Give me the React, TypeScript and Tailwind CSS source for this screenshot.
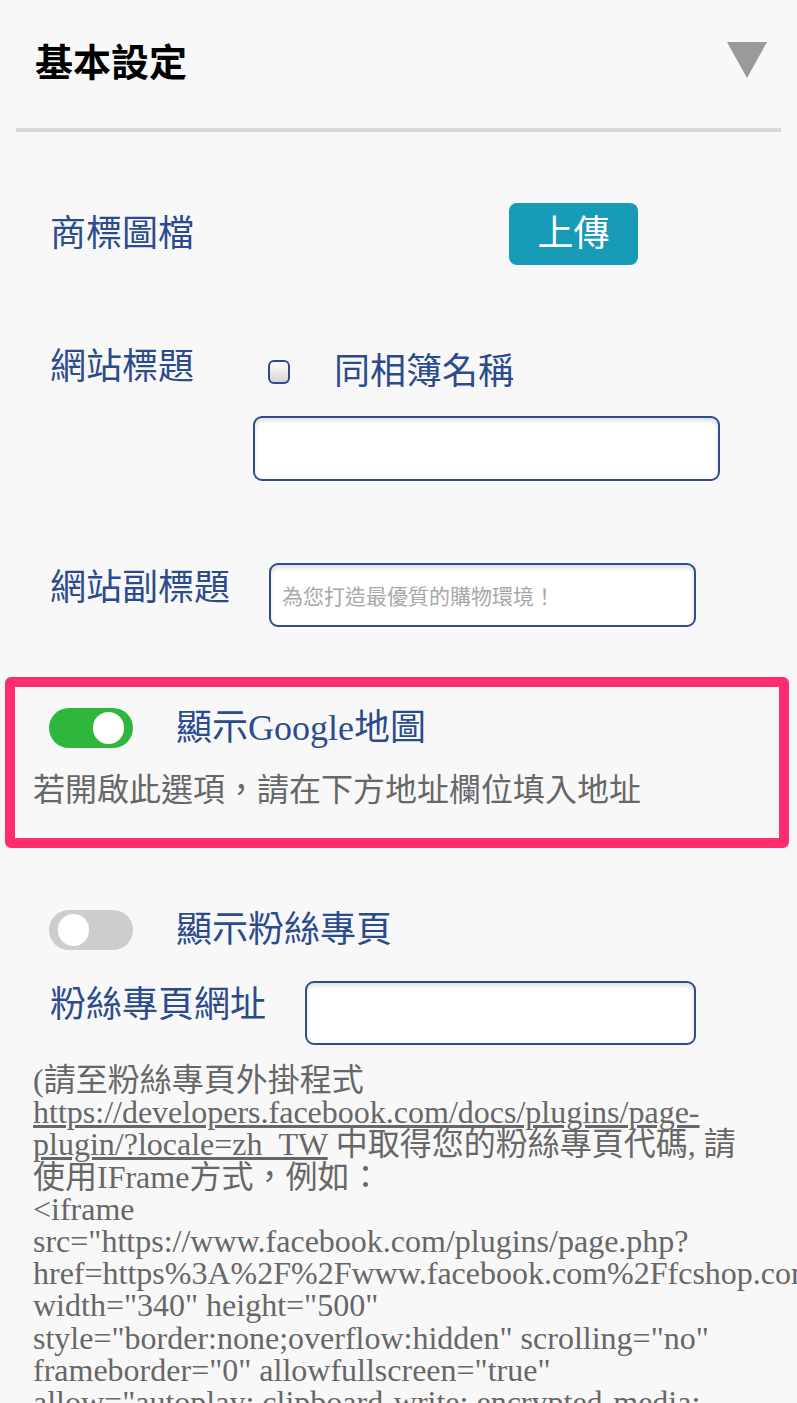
import { useState } from "react";

const blue = "text-[#2b4b8d]";

function Toggle({ on, onClick }: { on: boolean; onClick: () => void }) {
  return (
    <button
      type="button"
      onClick={onClick}
      className={`flex h-[40px] w-[84px] shrink-0 items-center rounded-full px-[9px] ${
        on ? "justify-end bg-[#2eb73c]" : "justify-start bg-[#cdcdcd]"
      }`}
    >
      <span className="block h-[32px] w-[31px] rounded-full bg-white" />
    </button>
  );
}

export default function App() {
  const [sameAlbum, setSameAlbum] = useState(false);
  const [showMap, setShowMap] = useState(true);
  const [showFans, setShowFans] = useState(false);

  return (
    <main className="min-h-screen w-full overflow-hidden bg-[#f8f8f9] pb-10 font-[Liberation_Serif,Noto_Sans_CJK_TC,serif]">
      {/* 標題列 */}
      <div className="flex h-[120px] items-center justify-between pl-[35px] pr-[30px]">
        <h1 className="text-[38px] font-bold leading-none text-black font-[Noto_Sans_CJK_TC,sans-serif]">
          基本設定
        </h1>
        <svg width="40" height="36" viewBox="0 0 40 36">
          <polygon points="0,0 40,0 20,36" fill="#9a9a9a" />
        </svg>
      </div>
      <div className="mx-[16px] mt-[8px] h-[4px] bg-[#ddd6d9]" />

      {/* 商標圖檔 */}
      <div className="mt-[71px] flex items-center pl-[50px]">
        <span className={`w-[459px] text-[36px] leading-none ${blue}`}>商標圖檔</span>
        <button className="flex h-[62px] w-[129px] items-center justify-center rounded-[8px] bg-[#179bb7] text-[36px] leading-none text-white">
          上傳
        </button>
      </div>

      {/* 網站標題 */}
      <div className="mt-[84px] flex items-start pl-[50px]">
        <span className={`w-[203px] text-[36px] leading-none ${blue}`}>網站標題</span>
        <div className="flex flex-col pt-[5px]">
          <label className="flex h-[36px] items-center pl-[15px]">
            <button
              type="button"
              onClick={() => setSameAlbum(!sameAlbum)}
              className="flex h-[24px] w-[22px] items-center justify-center rounded-[6px] border-2 border-[#2c4a8c] bg-gradient-to-b from-white to-[#d6d6d6] text-[14px] leading-none text-[#2c4a8c]"
            >
              {sameAlbum ? "✓" : ""}
            </button>
            <span className={`ml-[44px] text-[36px] leading-none ${blue}`}>同相簿名稱</span>
          </label>
          <input
            type="text"
            className="mt-[26px] h-[65px] w-[467px] rounded-[9px] border-2 border-[#2f4d8c] bg-white px-3 text-[22px] shadow-[inset_0_3px_4px_rgba(0,0,0,0.12)] outline-none"
          />
        </div>
      </div>

      {/* 網站副標題 */}
      <div className="mt-[82px] flex items-start pl-[50px]">
        <span className={`mt-[7px] w-[219px] text-[36px] leading-none ${blue}`}>網站副標題</span>
        <input
          type="text"
          placeholder="為您打造最優質的購物環境！"
          className="h-[64px] w-[427px] rounded-[9px] border-2 border-[#2f4d8c] bg-white pl-[11px] text-[21px] text-black shadow-[inset_0_3px_4px_rgba(0,0,0,0.12)] outline-none placeholder:text-[#a8a8a8] font-[Noto_Sans_CJK_TC,sans-serif]"
        />
      </div>

      {/* 顯示Google地圖 */}
      <div className="ml-[5px] mt-[50px] w-[784px] rounded-[6px] border-[10px] border-[#ff2d6e] pb-[32px] pl-[18px] pt-[21px]">
        <div className="ml-[16px] flex h-[40px] items-center">
          <Toggle on={showMap} onClick={() => setShowMap(!showMap)} />
          <span className={`ml-[43px] text-[36px] leading-none ${blue}`}>顯示Google地圖</span>
        </div>
        <p className="mt-[26px] text-[32px] leading-none text-[#676767]">
          若開啟此選項，請在下方地址欄位填入地址
        </p>
      </div>

      {/* 粉絲專頁 */}
      <div className="ml-[49px] mt-[62px] flex h-[40px] items-center">
        <Toggle on={showFans} onClick={() => setShowFans(!showFans)} />
        <span className={`ml-[43px] text-[36px] leading-none ${blue}`}>顯示粉絲專頁</span>
      </div>

      <div className="mt-[31px] flex items-start pl-[50px]">
        <span className={`mt-[6px] w-[255px] text-[36px] leading-none ${blue}`}>粉絲專頁網址</span>
        <input
          type="text"
          className="h-[64px] w-[391px] rounded-[9px] border-2 border-[#2f4d8c] bg-white px-3 text-[22px] shadow-[inset_0_3px_4px_rgba(0,0,0,0.12)] outline-none"
        />
      </div>

      <p className="mt-[19px] px-[33px] text-[32px] leading-[32.2px] text-[#676767]">
        (請至粉絲專頁外掛程式{" "}
        <a href="#" className="underline">
          https://developers.facebook.com/docs/plugins/page-plugin/?locale=zh_TW
        </a>{" "}
        中取得您的粉絲專頁代碼, 請使用IFrame方式，例如：
        <br />
        {'<iframe src="https://www.facebook.com/plugins/page.php?href=https%3A%2F%2Fwww.facebook.com%2Ffcshop.com.tw&tabs=timeline&width=340&height=500&small_header=false&adapt_container_width=true&hide_cover=false&show_facepile=true" width="340" height="500" style="border:none;overflow:hidden" scrolling="no" frameborder="0" allowfullscreen="true" allow="autoplay; clipboard-write; encrypted-media; picture-in-picture; web-share"></iframe>)'}
      </p>
    </main>
  );
}
